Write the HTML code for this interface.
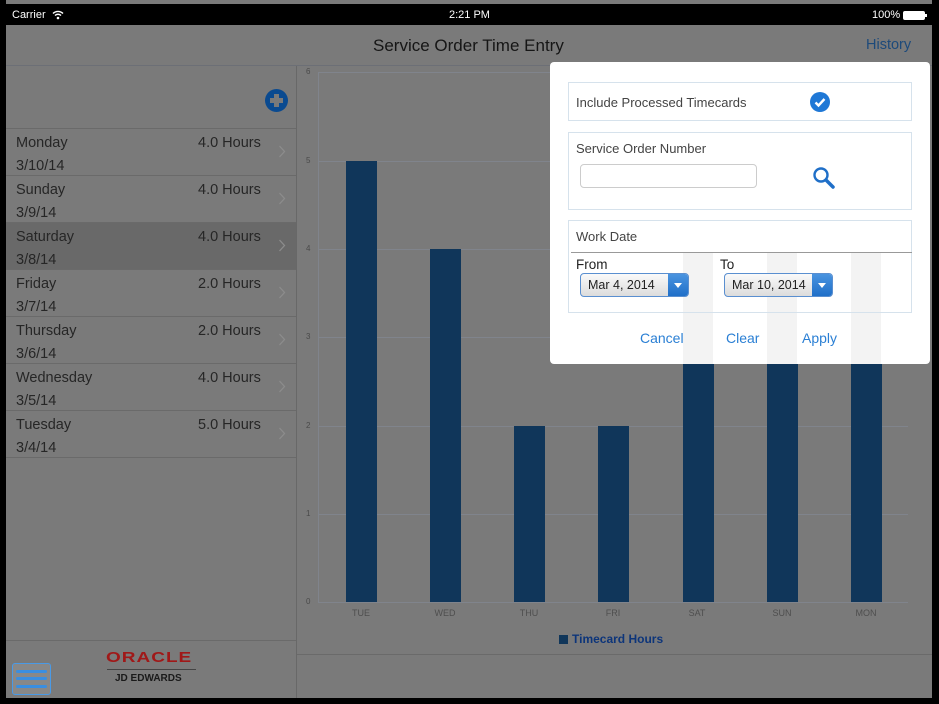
<!DOCTYPE html>
<html><head><meta charset="utf-8"><style>
*{margin:0;padding:0;box-sizing:border-box}
body{width:939px;height:704px;background:#000;position:relative;overflow:hidden;font-family:"Liberation Sans",sans-serif}
.a{position:absolute}
.screen{left:6px;top:0;width:926px;height:698px;background:#7a7a7a}
.t{position:absolute;white-space:nowrap}
.row{position:absolute;left:6px;width:290px;height:47px;border-bottom:1px solid #6a6a6a}
.row .d{left:10px;top:6px;font-size:14.5px;color:#262626}
.row .s{left:10px;top:29px;font-size:14.5px;color:#262626}
.row .h{left:192px;top:6px;font-size:14.5px;color:#262626}
.row svg{position:absolute;left:272px;top:16px}
.grid{position:absolute;left:318px;width:590px;height:1px;background:#80848c}
.yl{position:absolute;left:306px;font-size:8px;color:#4a4a4a}
.bar{position:absolute;width:31px;background:#10365a}
.xl{position:absolute;top:608px;font-size:9px;color:#4e4e4e;width:40px;text-align:center}
.box{position:absolute;left:568px;width:344px;border:1px solid #d6e2ec;background:#fff}
.sel{position:absolute;height:24px;border:1px solid #5a8fd0;border-radius:4px;background:linear-gradient(#fafafa,#dcdcdc);font-size:12.5px;color:#222;padding:4px 0 0 7px}
.sel i{position:absolute;right:0;top:0;width:20px;height:22px;background:linear-gradient(#4a94e0,#1f6fc8);border-radius:0 3px 3px 0}
.sel i:after{content:"";position:absolute;left:6px;top:9px;border-left:4px solid transparent;border-right:4px solid transparent;border-top:5px solid #fff}
.btn{position:absolute;top:330px;font-size:14px;color:#2a7fd4}
</style></head><body>
<div class="a screen"></div>
<div class="a" style="left:6px;top:4px;width:926px;height:21px;background:#000"></div>
<div class="t" style="left:12px;top:9px;font-size:11px;color:#fff">Carrier</div>
<svg class="a" style="left:52px;top:10px" width="12" height="10" viewBox="0 0 12 10"><path d="M1 3.5a7 7 0 0 1 10 0M3 5.5a4.2 4.2 0 0 1 6 0" stroke="#fff" stroke-width="1.4" fill="none"/><circle cx="6" cy="8" r="1.3" fill="#fff"/></svg>
<div class="t" style="left:449px;top:9px;font-size:11px;color:#fff">2:21 PM</div>
<div class="t" style="left:872px;top:9px;font-size:11px;color:#fff">100%</div>
<div class="a" style="left:903px;top:11px;width:22px;height:9px;border:1px solid #fff;border-radius:2px;background:#fff"></div>
<div class="a" style="left:925px;top:14px;width:2px;height:3px;background:#fff"></div>
<div class="t" style="left:373px;top:36px;font-size:17px;color:#161616">Service Order Time Entry</div>
<div class="t" style="left:866px;top:37px;font-size:14.5px;color:#1d4a7a">History</div>
<div class="a" style="left:6px;top:65px;width:926px;height:1px;background:#6c6f76"></div>
<div class="a" style="left:296px;top:66px;width:1px;height:632px;background:#686868"></div>
<div class="a" style="left:265px;top:89px;width:23px;height:23px;border-radius:50%;background:#0a4a90"></div>
<div class="a" style="left:274px;top:94px;width:5px;height:13px;background:#7a7a7a"></div>
<div class="a" style="left:270px;top:98px;width:13px;height:5px;background:#7a7a7a"></div>
<div class="a" style="left:6px;top:128px;width:290px;height:1px;background:#6a6a6a"></div>
<div class="row" style="top:129px"><span class="t d">Monday</span><span class="t h">4.0 Hours</span><svg width="8" height="13"><path d="M1.5 1l5 5.5-5 5.5" stroke="#8c8c8c" stroke-width="1.3" fill="none"/></svg><span class="t s">3/10/14</span></div>
<div class="row" style="top:176px"><span class="t d">Sunday</span><span class="t h">4.0 Hours</span><svg width="8" height="13"><path d="M1.5 1l5 5.5-5 5.5" stroke="#8c8c8c" stroke-width="1.3" fill="none"/></svg><span class="t s">3/9/14</span></div>
<div class="row" style="top:223px;background:#696969"><span class="t d">Saturday</span><span class="t h">4.0 Hours</span><svg width="8" height="13"><path d="M1.5 1l5 5.5-5 5.5" stroke="#8c8c8c" stroke-width="1.3" fill="none"/></svg><span class="t s">3/8/14</span></div>
<div class="row" style="top:270px"><span class="t d">Friday</span><span class="t h">2.0 Hours</span><svg width="8" height="13"><path d="M1.5 1l5 5.5-5 5.5" stroke="#8c8c8c" stroke-width="1.3" fill="none"/></svg><span class="t s">3/7/14</span></div>
<div class="row" style="top:317px"><span class="t d">Thursday</span><span class="t h">2.0 Hours</span><svg width="8" height="13"><path d="M1.5 1l5 5.5-5 5.5" stroke="#8c8c8c" stroke-width="1.3" fill="none"/></svg><span class="t s">3/6/14</span></div>
<div class="row" style="top:364px"><span class="t d">Wednesday</span><span class="t h">4.0 Hours</span><svg width="8" height="13"><path d="M1.5 1l5 5.5-5 5.5" stroke="#8c8c8c" stroke-width="1.3" fill="none"/></svg><span class="t s">3/5/14</span></div>
<div class="row" style="top:411px"><span class="t d">Tuesday</span><span class="t h">5.0 Hours</span><svg width="8" height="13"><path d="M1.5 1l5 5.5-5 5.5" stroke="#8c8c8c" stroke-width="1.3" fill="none"/></svg><span class="t s">3/4/14</span></div>
<div class="a" style="left:6px;top:640px;width:290px;height:1px;background:#6a6a6a"></div>
<div class="t" style="left:106px;top:647px;font-size:19px;color:#a01818;font-weight:bold;letter-spacing:1px;transform:scaleY(0.8)">ORACLE</div>
<div class="a" style="left:107px;top:669px;width:89px;height:1px;background:#444"></div>
<div class="t" style="left:115px;top:673px;font-size:10px;font-weight:bold;color:#1a1a1a">JD EDWARDS</div>
<div class="a" style="left:12px;top:663px;width:39px;height:32px;border:1.5px solid #4a9ae6;border-radius:3px;background:#888"></div>
<div class="a" style="left:16px;top:670px;width:31px;height:3px;background:#3a8ee0;border-radius:2px"></div>
<div class="a" style="left:16px;top:677px;width:31px;height:3px;background:#3a8ee0;border-radius:2px"></div>
<div class="a" style="left:16px;top:685px;width:31px;height:3px;background:#3a8ee0;border-radius:2px"></div>
<div class="a" style="left:318px;top:72px;width:1px;height:530px;background:#80848c"></div>
<div class="grid" style="top:72px"></div><div class="grid" style="top:161px"></div><div class="grid" style="top:249px"></div><div class="grid" style="top:337px"></div><div class="grid" style="top:426px"></div><div class="grid" style="top:514px"></div><div class="grid" style="top:602px"></div>
<div class="yl" style="top:67px">6</div><div class="yl" style="top:156px">5</div><div class="yl" style="top:244px">4</div><div class="yl" style="top:332px">3</div><div class="yl" style="top:421px">2</div><div class="yl" style="top:509px">1</div><div class="yl" style="top:597px">0</div>
<div class="bar" style="left:346px;top:161px;height:441px"></div>
<div class="bar" style="left:430px;top:249px;height:353px"></div>
<div class="bar" style="left:514px;top:426px;height:176px"></div>
<div class="bar" style="left:598px;top:426px;height:176px"></div>
<div class="bar" style="left:683px;top:249px;height:353px"></div>
<div class="bar" style="left:767px;top:249px;height:353px"></div>
<div class="bar" style="left:851px;top:249px;height:353px"></div>
<div class="xl" style="left:341px">TUE</div><div class="xl" style="left:425px">WED</div><div class="xl" style="left:509px">THU</div><div class="xl" style="left:593px">FRI</div><div class="xl" style="left:677px">SAT</div><div class="xl" style="left:762px">SUN</div><div class="xl" style="left:846px">MON</div>
<div class="a" style="left:559px;top:635px;width:9px;height:9px;background:#10365a"></div>
<div class="t" style="left:572px;top:632px;font-size:12px;font-weight:bold;color:#0d357a">Timecard Hours</div>
<div class="a" style="left:297px;top:654px;width:635px;height:1px;background:#6a6a6a"></div>
<div class="a" style="left:550px;top:62px;width:380px;height:302px;background:#fff;border-radius:4px"></div>
<div class="a" style="left:683px;top:252px;width:30px;height:112px;background:#f3f3f3"></div>
<div class="a" style="left:767px;top:252px;width:30px;height:112px;background:#f3f3f3"></div>
<div class="a" style="left:851px;top:252px;width:30px;height:112px;background:#f3f3f3"></div>
<div class="box" style="top:82px;height:39px"></div>
<div class="t" style="left:576px;top:95px;font-size:13px;color:#444">Include Processed Timecards</div>
<div class="a" style="left:810px;top:92px;width:20px;height:20px;border-radius:50%;background:#1f78d6"></div>
<svg class="a" style="left:810px;top:92px" width="20" height="20"><path d="M5.5 10.5l3 3 6-6.5" stroke="#fff" stroke-width="2.4" fill="none"/></svg>
<div class="box" style="top:132px;height:78px"></div>
<div class="t" style="left:576px;top:141px;font-size:13px;color:#444">Service Order Number</div>
<div class="a" style="left:580px;top:164px;width:177px;height:24px;border:1px solid #ccc;border-radius:4px;background:#fff"></div>
<svg class="a" style="left:812px;top:166px" width="26" height="24"><circle cx="9" cy="9" r="6.5" stroke="#1f6fc8" stroke-width="2.4" fill="none"/><path d="M14 14l7 7" stroke="#1f6fc8" stroke-width="3.5" stroke-linecap="round"/></svg>
<div class="box" style="top:220px;height:93px;background:transparent"></div>
<div class="t" style="left:576px;top:229px;font-size:13px;color:#444">Work Date</div>
<div class="a" style="left:571px;top:252px;width:341px;height:1px;background:#999"></div>
<div class="t" style="left:576px;top:257px;font-size:13.5px;color:#222">From</div>
<div class="t" style="left:720px;top:257px;font-size:13.5px;color:#222">To</div>
<div class="sel" style="left:580px;top:273px;width:109px">Mar 4, 2014<i></i></div>
<div class="sel" style="left:724px;top:273px;width:109px">Mar 10, 2014<i></i></div>
<div class="btn" style="left:640px">Cancel</div>
<div class="btn" style="left:726px">Clear</div>
<div class="btn" style="left:802px">Apply</div>
</body></html>
